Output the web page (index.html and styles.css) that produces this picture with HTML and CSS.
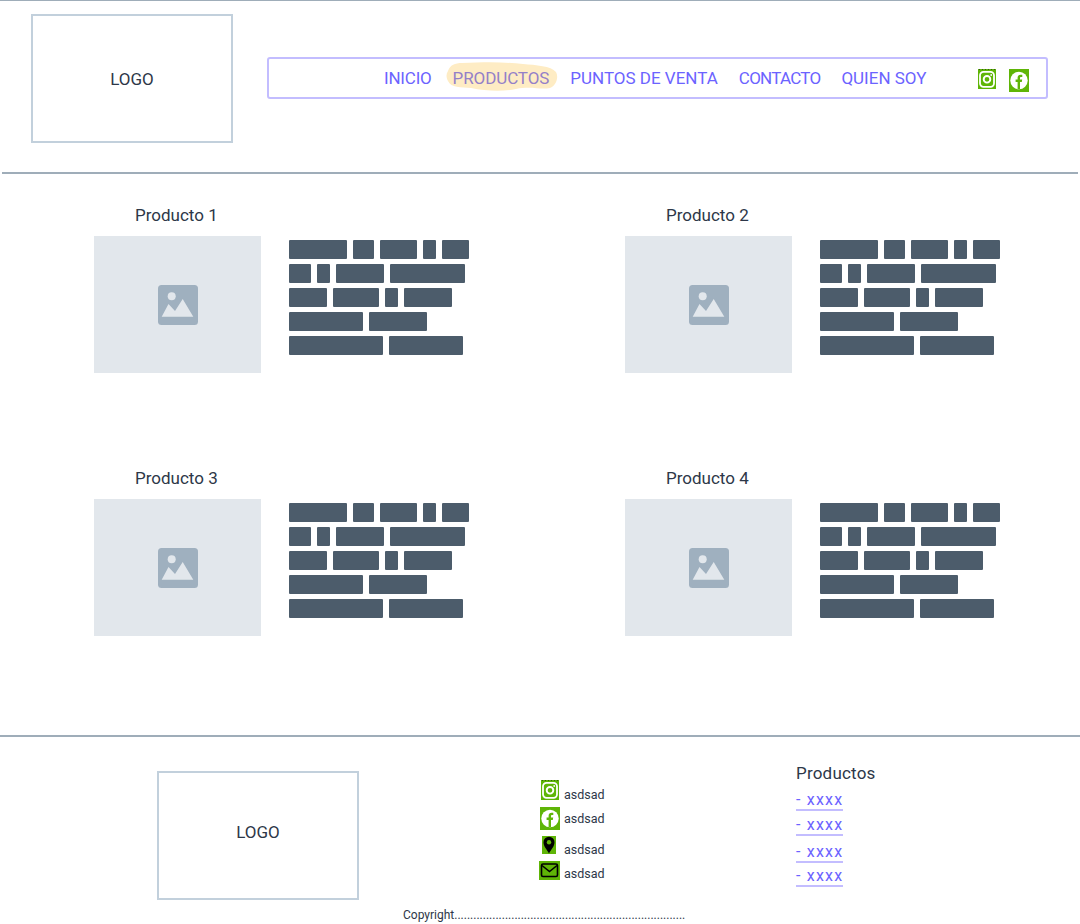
FILE: index.html
```html
<!DOCTYPE html>
<html lang="en">
<head>
    <meta charset="UTF-8">
    <title>Productos</title>
    <link rel="stylesheet" href="styles.css">
</head>
<body>
    <header class="header">
        <div class="logo">LOGO</div>
        <nav class="nav">
            <a href="#" class="narrow">INICIO</a>
            <a href="#" class="active">
                <svg class="blob" viewBox="0 0 112 30"><path d="M2 9C4 3 9 1 16 1C40 0 60 0 77 2C90 3 105 4 110 10C113 15 110 24 104 26C95 28 85 24 70 27C55 30 40 29 25 26C15 25 5 26 2 19C0 15 0 12 2 9z"/></svg>
                PRODUCTOS
            </a>
            <a href="#">PUNTOS DE VENTA</a>
            <a href="#" class="tight">CONTACTO</a>
            <a href="#">QUIEN SOY</a>
            <span class="nav-icons">
                <svg class="icon-ig" viewBox="0 0 18 20"><rect width="18" height="20" fill="#5fb507"/><path d="M1 .4h16" stroke="#222" stroke-width=".7" stroke-dasharray="1 2"/><rect x="2" y="2.800" width="14" height="15" rx="3.500" fill="none" stroke="#fff" stroke-width="1.800"/><circle cx="9" cy="10.300" r="3.300" fill="none" stroke="#fff" stroke-width="1.900"/><circle cx="13.200" cy="6" r=".9" fill="#fff"/></svg>
                <svg class="icon-fb" viewBox="0 0 20 23"><rect width="20" height="23" fill="#5fb507"/><circle cx="10" cy="11.500" r="8.700" fill="#fff"/><path d="M8.600 20v-7H6.600v-2.400h2V8.800c0-2 1.200-3.100 3-3.100h1.700V8h-1.200c-.8 0-1.100.5-1.100 1.100v1.500h2.200l-.4 2.400h-1.800v7z" fill="#5fb507"/></svg>
            </span>
        </nav>
    </header>

    <main class="products">
        <section class="product">
            <h2>Producto 1</h2>
            <div class="product-body">
                <div class="thumb">
                    <svg viewBox="0 0 40 40"><rect width="40" height="40" rx="3.500" fill="#9fb0bf"/><circle cx="13.700" cy="11.300" r="4" fill="#e2e7ec"/><path d="M3.700 31.700L10.500 19l6.500 7L24.700 14l10.600 17.700z" fill="#e2e7ec"/></svg>
                </div>
                <div class="bricks">
                    <div><i style="width:58px"></i><i style="width:21px"></i><i style="width:37px"></i><i style="width:13px"></i><i style="width:27px"></i></div>
                    <div><i style="width:22px"></i><i style="width:13px"></i><i style="width:48px"></i><i style="width:75px"></i></div>
                    <div><i style="width:38px"></i><i style="width:46px"></i><i style="width:13px"></i><i style="width:48px"></i></div>
                    <div><i style="width:74px"></i><i style="width:58px"></i></div>
                    <div><i style="width:94px"></i><i style="width:74px"></i></div>
                </div>
            </div>
        </section>
        <section class="product">
            <h2>Producto 2</h2>
            <div class="product-body">
                <div class="thumb">
                    <svg viewBox="0 0 40 40"><rect width="40" height="40" rx="3.500" fill="#9fb0bf"/><circle cx="13.700" cy="11.300" r="4" fill="#e2e7ec"/><path d="M3.700 31.700L10.500 19l6.500 7L24.700 14l10.600 17.700z" fill="#e2e7ec"/></svg>
                </div>
                <div class="bricks">
                    <div><i style="width:58px"></i><i style="width:21px"></i><i style="width:37px"></i><i style="width:13px"></i><i style="width:27px"></i></div>
                    <div><i style="width:22px"></i><i style="width:13px"></i><i style="width:48px"></i><i style="width:75px"></i></div>
                    <div><i style="width:38px"></i><i style="width:46px"></i><i style="width:13px"></i><i style="width:48px"></i></div>
                    <div><i style="width:74px"></i><i style="width:58px"></i></div>
                    <div><i style="width:94px"></i><i style="width:74px"></i></div>
                </div>
            </div>
        </section>
        <section class="product">
            <h2>Producto 3</h2>
            <div class="product-body">
                <div class="thumb">
                    <svg viewBox="0 0 40 40"><rect width="40" height="40" rx="3.500" fill="#9fb0bf"/><circle cx="13.700" cy="11.300" r="4" fill="#e2e7ec"/><path d="M3.700 31.700L10.500 19l6.500 7L24.700 14l10.600 17.700z" fill="#e2e7ec"/></svg>
                </div>
                <div class="bricks">
                    <div><i style="width:58px"></i><i style="width:21px"></i><i style="width:37px"></i><i style="width:13px"></i><i style="width:27px"></i></div>
                    <div><i style="width:22px"></i><i style="width:13px"></i><i style="width:48px"></i><i style="width:75px"></i></div>
                    <div><i style="width:38px"></i><i style="width:46px"></i><i style="width:13px"></i><i style="width:48px"></i></div>
                    <div><i style="width:74px"></i><i style="width:58px"></i></div>
                    <div><i style="width:94px"></i><i style="width:74px"></i></div>
                </div>
            </div>
        </section>
        <section class="product">
            <h2>Producto 4</h2>
            <div class="product-body">
                <div class="thumb">
                    <svg viewBox="0 0 40 40"><rect width="40" height="40" rx="3.500" fill="#9fb0bf"/><circle cx="13.700" cy="11.300" r="4" fill="#e2e7ec"/><path d="M3.700 31.700L10.500 19l6.500 7L24.700 14l10.600 17.700z" fill="#e2e7ec"/></svg>
                </div>
                <div class="bricks">
                    <div><i style="width:58px"></i><i style="width:21px"></i><i style="width:37px"></i><i style="width:13px"></i><i style="width:27px"></i></div>
                    <div><i style="width:22px"></i><i style="width:13px"></i><i style="width:48px"></i><i style="width:75px"></i></div>
                    <div><i style="width:38px"></i><i style="width:46px"></i><i style="width:13px"></i><i style="width:48px"></i></div>
                    <div><i style="width:74px"></i><i style="width:58px"></i></div>
                    <div><i style="width:94px"></i><i style="width:74px"></i></div>
                </div>
            </div>
        </section>
    </main>

    <footer class="footer">
        <div class="logo footer-logo">LOGO</div>
        <div class="contact">
            <div class="contact-row row-ig">
                <span class="contact-icon"><svg class="icon-ig" viewBox="0 0 18 20"><rect width="18" height="20" fill="#5fb507"/><path d="M1 .4h16" stroke="#222" stroke-width=".7" stroke-dasharray="1 2"/><rect x="2" y="2.800" width="14" height="15" rx="3.500" fill="none" stroke="#fff" stroke-width="1.800"/><circle cx="9" cy="10.300" r="3.300" fill="none" stroke="#fff" stroke-width="1.900"/><circle cx="13.200" cy="6" r=".9" fill="#fff"/></svg></span>
                <span class="contact-text">asdsad</span>
            </div>
            <div class="contact-row row-fb">
                <span class="contact-icon"><svg class="icon-fb" viewBox="0 0 20 23"><rect width="20" height="23" fill="#5fb507"/><circle cx="10" cy="11.500" r="8.700" fill="#fff"/><path d="M8.600 20v-7H6.600v-2.400h2V8.800c0-2 1.200-3.100 3-3.100h1.700V8h-1.200c-.8 0-1.100.5-1.100 1.100v1.500h2.200l-.4 2.400h-1.800v7z" fill="#5fb507"/></svg></span>
                <span class="contact-text">asdsad</span>
            </div>
            <div class="contact-row row-pin">
                <span class="contact-icon"><svg class="icon-pin" viewBox="0 0 14 18"><rect width="14" height="18" fill="#5fb507"/><path d="M7 17.500C5 13.500 1.500 10.500 1.500 6.200a5.500 5.500 0 0 1 11 0C12.500 10.500 9 13.500 7 17.500z" fill="#000"/><circle cx="7" cy="6.200" r="2.200" fill="#5fb507"/></svg></span>
                <span class="contact-text">asdsad</span>
            </div>
            <div class="contact-row row-mail">
                <span class="contact-icon"><svg class="icon-mail" viewBox="0 0 21 19"><rect width="21" height="19" fill="#5fb507"/><rect x="2.500" y="3" width="16" height="12.500" rx="1.500" fill="none" stroke="#000" stroke-width="1.600"/><path d="M3 4.500l7.500 6 7.500-6" fill="none" stroke="#000" stroke-width="1.600"/></svg></span>
                <span class="contact-text">asdsad</span>
            </div>
        </div>
        <div class="footer-links">
            <h3>Productos</h3>
            <a href="#">- xxxx</a>
            <a href="#">- xxxx</a>
            <a href="#" class="gap">- xxxx</a>
            <a href="#">- xxxx</a>
        </div>
        <p class="copyright">Copyright.........................................................................</p>
    </footer>
</body>
</html>
```

FILE: styles.css
```css
/* Global */
body {
    margin: 0;
    font-family: 'Roboto', Arial, sans-serif;
    color: #2d3748;
    background: #fff;
}

a {
    text-decoration: none;
}

svg {
    display: block;
}

/* Header */
.header {
    display: flex;
    align-items: flex-start;
    height: 172px;
    padding: 13px 32px 0 31px;
    border-top: 1px solid #9fadb9;
    box-sizing: border-box;
}

.logo {
    width: 202px;
    height: 129px;
    box-sizing: border-box;
    border: 2px solid #c2d0dc;
    display: flex;
    align-items: center;
    justify-content: center;
    font-size: 17px;
    flex-shrink: 0;
}

.nav {
    display: flex;
    align-items: center;
    gap: 21px;
    width: 781px;
    height: 42px;
    margin: 43px 0 0 34px;
    padding: 0 17px 0 115px;
    box-sizing: border-box;
    border: 2px solid #c3bdff;
    border-radius: 3px;
    font-size: 17px;
}

.nav a {
    color: #6c63ff;
    line-height: 20px;
    white-space: nowrap;
}

.nav a.narrow {
    letter-spacing: -0.2px;
}

.nav a.tight {
    letter-spacing: -0.75px;
}

.nav a.active {
    position: relative;
    z-index: 0;
    color: #9480c8;
    letter-spacing: -0.1px;
}

.blob {
    position: absolute;
    z-index: -1;
    left: -7px;
    top: -6px;
    width: 112px;
    height: 30px;
    fill: #feecc4;
}

.nav-icons {
    display: flex;
    align-items: flex-start;
    gap: 13px;
    margin: 5px 0 0 auto;
}

.icon-ig {
    width: 18px;
    height: 20px;
}

.icon-fb {
    width: 20px;
    height: 23px;
}

/* Products */
.products {
    display: grid;
    grid-template-columns: 531px 1fr;
    grid-auto-rows: 263px;
    height: 563px;
    margin: 0 2px;
    padding-left: 92px;
    border-top: 2px solid #9fadb9;
    box-sizing: border-box;
}

.product {
    padding-top: 30px;
}

.product h2 {
    margin: 0 0 10px 41px;
    font-size: 17px;
    font-weight: 400;
    line-height: 22px;
}

.product-body {
    display: flex;
}

.thumb {
    width: 167px;
    height: 137px;
    background: #e2e7ec;
    display: flex;
    align-items: center;
    justify-content: center;
}

.thumb svg {
    width: 40px;
    height: 40px;
}

.bricks {
    margin-left: 28px;
    padding-top: 4px;
}

.bricks div {
    display: flex;
    gap: 6px;
    margin-bottom: 5px;
}

.bricks i {
    display: block;
    height: 19px;
    background: #4c5c6b;
    border-radius: 1px;
}

/* Footer */
.footer {
    position: relative;
    height: 189px;
    border-top: 2px solid #9fadb9;
    box-sizing: border-box;
    display: flex;
    padding: 34px 0 0 157px;
}

.footer-logo {
    padding-bottom: 8px;
}

.contact {
    width: 257px;
    margin-left: 180px;
    padding-top: 9px;
    box-sizing: border-box;
    font-size: 12.5px;
    line-height: 16px;
}

.contact-row {
    display: flex;
    align-items: flex-start;
}

.contact-icon {
    display: flex;
    justify-content: center;
    width: 22px;
    margin-right: 3px;
}

.row-ig {
    height: 27px;
}

.row-ig .contact-text {
    margin-top: 7px;
}

.row-fb {
    height: 29px;
}

.row-fb .contact-text {
    margin-top: 4px;
}

.row-pin {
    height: 25px;
}

.row-pin .contact-text {
    margin-top: 6px;
}

.row-mail .contact-text {
    margin-top: 5px;
}

.row-pin .contact-icon,
.row-mail .contact-icon {
    margin-left: -1px;
    margin-right: 4px;
}

.icon-pin {
    width: 14px;
    height: 18px;
}

.icon-mail {
    width: 21px;
    height: 19px;
}

.footer-links {
    display: flex;
    flex-direction: column;
    align-items: flex-start;
    font-size: 16px;
}

.footer-links h3 {
    margin: -8px 0 7px;
    font-size: 17px;
    font-weight: 400;
    letter-spacing: 0.2px;
}

.footer-links a {
    color: #6c63ff;
    border-bottom: 2px solid #c3bdff;
    margin-bottom: 4px;
    line-height: 19px;
    letter-spacing: 1.2px;
}

.footer-links a.gap {
    margin-top: 2px;
    margin-bottom: 3px;
}

.copyright {
    margin: 0;
    position: absolute;
    left: 403px;
    bottom: 2px;
    font-size: 12px;
}
```
